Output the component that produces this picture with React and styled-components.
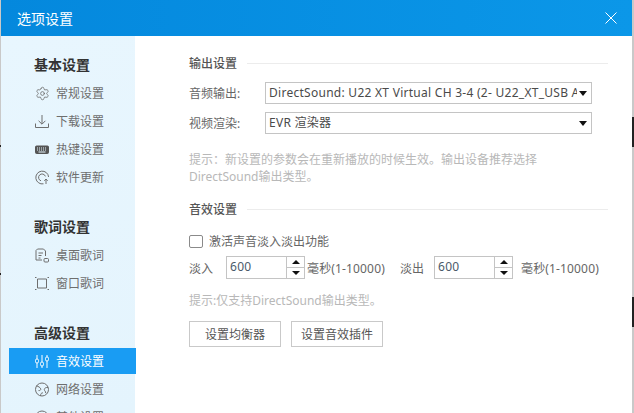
import React from "react";
import styled, { createGlobalStyle } from "styled-components";
import { Settings } from "lucide-react";

const GlobalStyle = createGlobalStyle`
  html, body {
    margin: 0;
    height: 100%;
    overflow: hidden;
    font-family: "Noto Sans", "Noto Sans CJK SC", sans-serif;
    font-size: 12px;
    color: #666;
  }
  * { box-sizing: border-box; }
`;

const Page = styled.div`
  position: relative;
  width: 634px;
  height: 413px;
  padding: 0 2px 0 1px;
  background: #c9c9c9;
  overflow: hidden;
`;

const EdgeMark = styled.i`
  position: absolute;
  top: ${props => props.$top}px;
  ${props => (props.$left ? "left: 0" : "right: 0")};
  width: ${props => (props.$left ? 1 : 2)}px;
  height: ${props => props.$h}px;
  background: #222;
`;

const Window = styled.div`
  display: flex;
  flex-direction: column;
  height: 413px;
  background: #fff;
`;

const TitleBar = styled.header`
  flex: none;
  display: flex;
  align-items: center;
  justify-content: space-between;
  height: 36px;
  padding: 0 15px 0 16px;
  background: linear-gradient(90deg, #0488dd, #0b97e8);
  color: #fff;
  font-size: 14px;
`;

const Body = styled.div`
  flex: 1;
  display: flex;
  min-height: 0;
`;

const Sidebar = styled.nav`
  flex: none;
  width: 134px;
  padding-top: 19px;
  background: linear-gradient(170deg, #e8f6fe, #e4f4fd);
`;

const Group = styled.div`
  margin-bottom: 27px;
`;

const GroupTitle = styled.div`
  height: 20px;
  margin-bottom: 5px;
  padding-left: 33px;
  font-size: 14px;
  line-height: 20px;
  font-weight: 700;
  color: #333;
`;

const Item = styled.div`
  display: flex;
  align-items: center;
  height: 26px;
  margin: 0 -1px 2px 8px;
  padding-left: 26px;
  gap: 7px;
  color: ${props => (props.$active ? "#fff" : "#6e6e6e")};
  background: ${props => (props.$active ? "#199cf3" : "transparent")};
`;

const IconBox = styled.svg`
  flex: none;
  width: 14px;
  height: 15px;
  fill: none;
  stroke: currentColor;
  stroke-width: 1;
`;

const Content = styled.main`
  flex: 1;
  padding: 17px 24px 0 54px;
`;

const SectionHead = styled.div`
  display: flex;
  align-items: center;
  gap: 10px;
  height: 20px;
  margin-top: ${props => props.$mt || 0}px;
  font-weight: 500;
  color: #555;
  &::after {
    content: "";
    flex: 1;
    height: 1px;
    background: #ececec;
  }
`;

const FieldRow = styled.div`
  display: flex;
  align-items: center;
  margin-top: ${props => props.$mt}px;
`;

const FieldLabel = styled.label`
  width: 76px;
  color: #666;
`;

const Select = styled.div`
  position: relative;
  width: 327px;
  height: 22px;
  padding: 0 14px 0 3px;
  border: 1px solid #c4c4c4;
  font-size: 12px;
  line-height: 19px;
  letter-spacing: 0.27px;
  color: #4a4a4a;
  white-space: nowrap;
  overflow: hidden;
  &::after {
    content: "";
    position: absolute;
    right: 4px;
    top: 8px;
    border: 4px solid transparent;
    border-top: 5px solid #111;
    border-bottom: 0;
  }
`;

const SelectText = styled.div`
  overflow: hidden;
`;

const Hint = styled.p`
  margin: ${props => props.$mt}px 0 0;
  color: #b8b8b8;
  line-height: 17px;
`;

const CheckRow = styled.label`
  display: flex;
  align-items: center;
  gap: 6px;
  height: 18px;
  margin-top: 13px;
`;

const CheckBox = styled.span`
  width: 14px;
  height: 13px;
  border: 1px solid #8a8a8a;
  border-radius: 2px;
`;

const FadeRow = styled.div`
  display: flex;
  align-items: center;
  height: 23px;
  margin-top: 6px;
`;

const FadeLabel = styled.span`
  width: ${props => props.$w}px;
`;

const Spinner = styled.div`
  display: flex;
  width: 79px;
  height: 23px;
  border: 1px solid #c4c4c4;
`;

const SpinnerValue = styled.div`
  flex: 1;
  padding-left: 3px;
  line-height: 19px;
  font-size: 12px;
  color: #4a5a6a;
  letter-spacing: 0.3px;
`;

const SpinnerButtons = styled.div`
  display: flex;
  flex-direction: column;
  width: 18px;
  border-left: 1px solid #c4c4c4;
`;

const SpinnerButton = styled.div`
  flex: 1;
  display: flex;
  align-items: center;
  justify-content: center;
  & + & {
    border-top: 1px solid #c4c4c4;
  }
  &::before {
    content: "";
    border: 4px solid transparent;
    ${props =>
      props.$up
        ? "border-bottom: 4px solid #111; border-top: 0;"
        : "border-top: 4px solid #111; border-bottom: 0;"}
  }
`;

const Unit = styled.span`
  width: ${props => props.$w}px;
  margin-left: ${props => props.$ml}px;
  letter-spacing: 0.15px;
  white-space: nowrap;
`;

const ButtonRow = styled.div`
  display: flex;
  gap: 10px;
  margin-top: 12px;
`;

const Button = styled.button`
  width: ${props => props.$w}px;
  height: 26px;
  padding: 0;
  border: 1px solid #c9c9c9;
  background: #fff;
  color: #555;
  font: inherit;
`;

const GearIcon = () => <Settings size={15} strokeWidth={1.3} style={{ flex: "none", marginRight: -1 }} />;

const DownloadIcon = () => (
  <IconBox viewBox="0 0 14 15">
    <path d="M7 1v9M3.6 6.8 7 10.2l3.4-3.4M.5 9.5v4h13v-4" />
  </IconBox>
);

const KeyboardIcon = () => (
  <IconBox viewBox="0 0 14 15">
    <rect x=".5" y="4" width="13" height="7.5" rx="1" fill="#555" stroke="#555" />
    <path d="M2 6h10M2 8h10" stroke="#e5f5fd" strokeDasharray="1 1" />
    <path d="M3.5 10h7" stroke="#e5f5fd" />
  </IconBox>
);

const UpdateIcon = () => (
  <IconBox viewBox="0 0 14 15">
    <path d="M8.5 13.8A6.4 6.4 0 1 1 13.6 7" />
    <path d="M10.4 6.4a3.5 3.5 0 1 0-4.4 4.4" />
    <path d="M11 14V9.2M9.3 10.8 11 9l1.7 1.8" />
  </IconBox>
);

const DesktopLyricIcon = () => (
  <IconBox viewBox="0 0 14 15">
    <path d="M2.5 1h6l2 2v5M2.5 1 1 2.5V12h6" />
    <path d="M3.5 5H8M3.5 7.5h3M3.5 10h2" />
    <rect x="9" y="10.5" width="4.5" height="3.5" rx="1" />
  </IconBox>
);

const WindowLyricIcon = () => (
  <IconBox viewBox="0 0 14 15">
    <path d="M2.5 3h9v9h-9z" />
    <path d="M0 1.500h1.500M12.500 1.500H14M0 13.500h1.500M12.500 13.500H14" />
  </IconBox>
);

const EffectIcon = () => (
  <IconBox viewBox="0 0 14 15">
    <path d="M2 1v4M2 9v5M7 1v7M7 12v2M12 1v2M12 7v7" />
    <rect x=".5" y="5" width="3" height="4" rx="1.4" />
    <rect x="5.5" y="8" width="3" height="4" rx="1.4" />
    <rect x="10.5" y="3" width="3" height="4" rx="1.4" />
  </IconBox>
);

const NetworkIcon = () => (
  <IconBox viewBox="0 0 14 15">
    <circle cx="7" cy="7.5" r="6.5" />
    <path d="M1.5 3.800c2 .8 3.600 1.500 4.200 3 .4 1.300-1 2-2.200 1.800M13 5.500c-1.700-.3-3.600.5-3.700 2-.1 1.400 1.600 1.600 1.400 3.600M5.500 14c0-2 .8-3.200 2.400-3.200" />
  </IconBox>
);

const ProxyIcon = () => (
  <IconBox viewBox="0 0 14 15">
    <circle cx="7" cy="7.5" r="6.5" />
  </IconBox>
);

const CloseIcon = () => (
  <svg width="12" height="12" viewBox="0 0 12 12" stroke="#fff" fill="none">
    <path d="M.5.5l11 11M11.5.5l-11 11" />
  </svg>
);

const navGroups = [
  {
    title: "基本设置",
    items: [
      { icon: GearIcon, label: "常规设置" },
      { icon: DownloadIcon, label: "下载设置" },
      { icon: KeyboardIcon, label: "热键设置" },
      { icon: UpdateIcon, label: "软件更新" },
    ],
  },
  {
    title: "歌词设置",
    items: [
      { icon: DesktopLyricIcon, label: "桌面歌词" },
      { icon: WindowLyricIcon, label: "窗口歌词" },
    ],
  },
  {
    title: "高级设置",
    items: [
      { icon: EffectIcon, label: "音效设置", active: true },
      { icon: NetworkIcon, label: "网络设置" },
      { icon: ProxyIcon, label: "其他设置" },
    ],
  },
];

const SpinBox = ({ value }) => (
  <Spinner>
    <SpinnerValue>{value}</SpinnerValue>
    <SpinnerButtons>
      <SpinnerButton $up />
      <SpinnerButton />
    </SpinnerButtons>
  </Spinner>
);

const App = () => {
  return (
    <Page>
      <GlobalStyle />
      <EdgeMark $top={117} $h={30} />
      <EdgeMark $top={297} $h={30} />
      <EdgeMark $left $top={145} $h={2} />
      <EdgeMark $left $top={273} $h={2} />
      <Window>
        <TitleBar>
          选项设置
          <CloseIcon />
        </TitleBar>
        <Body>
          <Sidebar>
            {navGroups.map(group => (
              <Group key={group.title}>
                <GroupTitle>{group.title}</GroupTitle>
                {group.items.map(({ icon: Icon, label, active }) => (
                  <Item key={label} $active={active}>
                    <Icon />
                    {label}
                  </Item>
                ))}
              </Group>
            ))}
          </Sidebar>
          <Content>
            <SectionHead>输出设置</SectionHead>
            <FieldRow $mt={9}>
              <FieldLabel>音频输出:</FieldLabel>
              <Select>
                <SelectText>DirectSound: U22 XT Virtual CH 3-4 (2- U22_XT_USB Audio)</SelectText>
              </Select>
            </FieldRow>
            <FieldRow $mt={8}>
              <FieldLabel>视频渲染:</FieldLabel>
              <Select>
                <SelectText>EVR 渲染器</SelectText>
              </Select>
            </FieldRow>
            <Hint $mt={17}>
              提示：新设置的参数会在重新播放的时候生效。输出设备推荐选择
              <br />
              DirectSound输出类型。
            </Hint>
            <SectionHead $mt={14}>音效设置</SectionHead>
            <CheckRow>
              <CheckBox />
              激活声音淡入淡出功能
            </CheckRow>
            <FadeRow>
              <FadeLabel $w={37}>淡入</FadeLabel>
              <SpinBox value="600" />
              <Unit $ml={2} $w={93}>毫秒(1-10000)</Unit>
              <FadeLabel $w={34}>淡出</FadeLabel>
              <SpinBox value="600" />
              <Unit $ml={8} $w={80}>毫秒(1-10000)</Unit>
            </FadeRow>
            <Hint $mt={13}>提示:仅支持DirectSound输出类型。</Hint>
            <ButtonRow>
              <Button $w={92}>设置均衡器</Button>
              <Button $w={92}>设置音效插件</Button>
            </ButtonRow>
          </Content>
        </Body>
      </Window>
    </Page>
  );
};

export default App;
